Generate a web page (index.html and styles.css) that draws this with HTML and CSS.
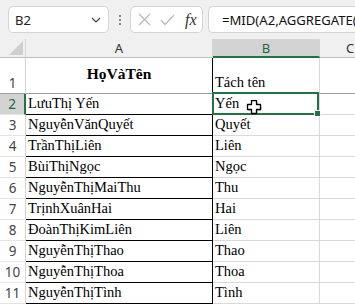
FILE: index.html
```html
<!DOCTYPE html>
<html lang="vi">
<head>
  <meta charset="UTF-8">
  <title>Tách tên</title>
  <link rel="stylesheet" href="styles.css">
</head>
<body>
  <div class="toolbar">
    <div class="namebox">
      <span>B2</span>
      <svg class="chev" width="10" height="6" viewBox="0 0 10 6"><path d="M1 1 L5 5 L9 1" fill="none" stroke="#444" stroke-width="1.2"/></svg>
    </div>
    <div class="dots"><i></i><i></i><i></i></div>
    <div class="fxbox">
      <svg width="13" height="13" viewBox="0 0 13 13"><path d="M1 1 L12 12 M12 1 L1 12" stroke="#b8b8b8" stroke-width="1.2"/></svg>
      <svg width="15" height="12" viewBox="0 0 15 12"><path d="M1 6 L5 10.5 L14 1" fill="none" stroke="#b8b8b8" stroke-width="1.2"/></svg>
      <span class="fx">fx</span>
    </div>
    <div class="formula">=MID(A2,AGGREGATE(</div>
  </div>

  <div class="sheet">
    <div class="corner"><span class="tri"></span></div>
    <div class="colhead">A</div>
    <div class="colhead active">B</div>
    <div class="colhead last">C</div>

    <div class="rowhead freeze">1</div>
    <div class="cell name freeze title">HọVàTên</div>
    <div class="cell freeze">Tách tên</div>
    <div class="cell freeze last"></div>

    <div class="rowhead active">2</div>
    <div class="cell name">LưuThị Yến</div>
    <div class="cell current">Yến
      <div class="sel"><span class="handle"></span></div>
      <svg class="cursor" width="17" height="16" viewBox="0 0 17 16">
        <path d="M6.5 1.5 H11.5 V5.5 H15.5 V10.5 H11.5 V14.5 H6.5 V10.5 H2.5 V5.5 H6.5 Z" fill="#555" opacity="0.5"/>
        <path d="M5.5 0.5 H10.5 V4.5 H14.5 V9.5 H10.5 V13.5 H5.5 V9.5 H1.5 V4.5 H5.5 Z" fill="#fff" stroke="#000" stroke-width="1.3" stroke-linejoin="round"/>
      </svg>
    </div>
    <div class="cell last"></div>

    <div class="rowhead">3</div>
    <div class="cell name">NguyễnVănQuyết</div>
    <div class="cell">Quyết</div>
    <div class="cell last"></div>

    <div class="rowhead">4</div>
    <div class="cell name">TrầnThịLiên</div>
    <div class="cell">Liên</div>
    <div class="cell last"></div>

    <div class="rowhead">5</div>
    <div class="cell name">BùiThịNgọc</div>
    <div class="cell">Ngọc</div>
    <div class="cell last"></div>

    <div class="rowhead">6</div>
    <div class="cell name">NguyễnThịMaiThu</div>
    <div class="cell">Thu</div>
    <div class="cell last"></div>

    <div class="rowhead">7</div>
    <div class="cell name">TrịnhXuânHai</div>
    <div class="cell">Hai</div>
    <div class="cell last"></div>

    <div class="rowhead">8</div>
    <div class="cell name">ĐoànThịKimLiên</div>
    <div class="cell">Liên</div>
    <div class="cell last"></div>

    <div class="rowhead">9</div>
    <div class="cell name">NguyễnThịThao</div>
    <div class="cell">Thao</div>
    <div class="cell last"></div>

    <div class="rowhead">10</div>
    <div class="cell name">NguyễnThịThoa</div>
    <div class="cell">Thoa</div>
    <div class="cell last"></div>

    <div class="rowhead">11</div>
    <div class="cell name">NguyễnThịTình</div>
    <div class="cell">Tình</div>
    <div class="cell last"></div>
  </div>
</body>
</html>
```

FILE: styles.css
```css
body {
  margin: 0;
  background-color: #fff;
  overflow: hidden;
  font-family: "Noto Sans", sans-serif;
}
.toolbar {
  height: 39px;
  background-color: #f0f0f0;
  display: flex;
  align-items: flex-start;
  padding: 6px 0 0 8px;
  box-sizing: border-box;
}
.namebox,
.fxbox,
.formula {
  height: 27px;
  background-color: #fff;
  border: 1px solid #d4d4d4;
  border-radius: 5px;
  box-sizing: border-box;
  display: flex;
  align-items: center;
}
.namebox {
  width: 101px;
  padding: 0 7px 0 6px;
  justify-content: space-between;
  font-size: 13px;
  color: #222;
}
.dots {
  width: 21px;
  height: 27px;
  display: flex;
  flex-direction: column;
  align-items: center;
  justify-content: center;
  gap: 2px;
}
.dots i {
  width: 2px;
  height: 2px;
  background-color: #888;
}
.fxbox {
  width: 73px;
  padding: 0 5px 0 7px;
  gap: 9px;
}
.fx {
  font-family: "Liberation Serif", serif;
  font-style: italic;
  font-size: 16px;
  color: #333;
  margin-left: 1px;
}
.formula {
  flex: 1;
  margin-left: 5px;
  border-right: none;
  border-radius: 5px 0 0 5px;
  padding-left: 13px;
  font-size: 13.1px;
  color: #111;
  white-space: nowrap;
  overflow: hidden;
}
.sheet {
  display: grid;
  grid-template-columns: 26px 187px 107px 1fr;
  grid-template-rows: 19px 36px repeat(10, 21px);
}
.sheet > div {
  box-sizing: border-box;
  display: flex;
  white-space: nowrap;
  overflow: hidden;
}
.corner {
  background-color: #f0f0f0;
  border-right: 1px solid #d4d4d4;
  border-bottom: 1px solid #bdbdbd;
  position: relative;
}
.tri {
  position: absolute;
  right: 2px;
  bottom: 2px;
  width: 0;
  height: 0;
  border-left: 14px solid transparent;
  border-bottom: 14px solid #cfcfcf;
}
.colhead {
  background-color: #f0f0f0;
  border-right: 1px solid #d4d4d4;
  border-bottom: 1px solid #bdbdbd;
  justify-content: center;
  align-items: center;
  font-size: 13px;
  color: #333;
}
.colhead.active {
  background-color: #d3d3d3;
  border-bottom: 2px solid #217346;
  color: #1b6a3f;
}
.colhead.last {
  justify-content: flex-start;
  padding-left: 26px;
  border-right: none;
}
.rowhead {
  border-right: 1px solid #d4d4d4;
  border-bottom: 1px solid #e4e4e4;
  justify-content: center;
  align-items: flex-end;
  padding-bottom: 1px;
  font-size: 13.5px;
  color: #444;
}
.rowhead.active {
  background-color: #d3d3d3;
  border-right: 2px solid #217346;
  color: #1b6a3f;
}
.cell {
  border-right: 1px solid #d9d9d9;
  border-bottom: 1px solid #d9d9d9;
  align-items: flex-end;
  padding: 0 2px 2px;
  font-family: "Liberation Serif", serif;
  font-size: 14.5px;
  line-height: 17px;
  color: #000;
}
.cell.name {
  border-right: 1px solid #000;
  border-bottom: 1px solid #000;
}
.cell.last {
  border-right: none;
}
.sheet > .freeze {
  border-bottom: 1px solid #9e9e9e;
}
.cell.title {
  justify-content: center;
  align-items: center;
  padding: 0 0 4px;
  font-weight: bold;
  font-size: 15.5px;
}
.sheet > .current {
  position: relative;
  overflow: visible;
}
.sel {
  position: absolute;
  left: -1px;
  top: -2px;
  width: 107px;
  height: 23px;
  border: 2px solid #217346;
  box-sizing: border-box;
}
.handle {
  position: absolute;
  right: -4px;
  bottom: -4px;
  width: 5px;
  height: 5px;
  background-color: #217346;
  border: 1px solid #fff;
}
.cursor {
  position: absolute;
  left: 33px;
  top: 6px;
}
```
